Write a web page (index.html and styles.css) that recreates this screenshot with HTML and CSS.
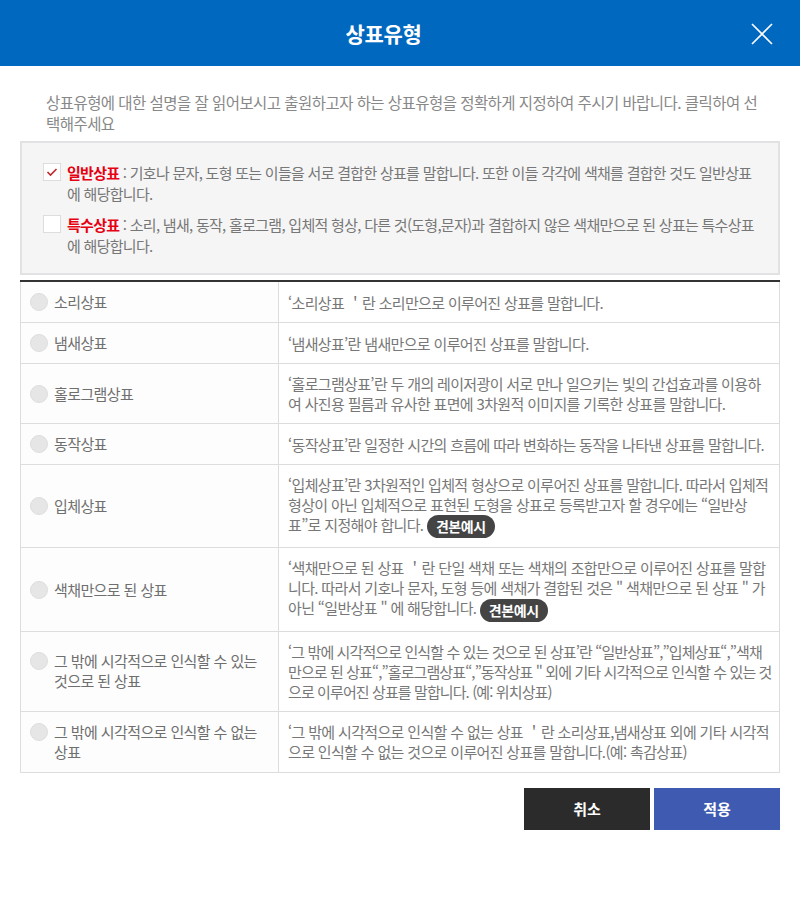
FILE: index.html
```html
<!DOCTYPE html>
<html lang="ko">

<head>
    <meta charset="UTF-8" />
    <meta name="viewport" content="width=device-width, initial-scale=1.0" />
    <title>상표유형</title>
    <link rel="stylesheet" href="styles.css">
</head>

<body>
    <div class="modal">
        <header class="modal-head">
            <h1>상표유형</h1>
            <button type="button" class="close-btn" aria-label="닫기">
                <svg width="22" height="22" viewBox="0 0 22 22">
                    <path d="M1 1L21 21M21 1L1 21" stroke="#fff" stroke-width="1.6" fill="none" />
                </svg>
            </button>
        </header>

        <div class="modal-body">
            <p class="intro">상표유형에 대한 설명을 잘 읽어보시고 출원하고자 하는 상표유형을 정확하게 지정하여 주시기 바랍니다. 클릭하여 선택해주세요</p>

            <div class="kind-box">
                <label class="kind">
                    <span class="check checked">
                        <svg width="12" height="10" viewBox="0 0 12 10">
                            <path d="M1.5 5L4.5 8L10.5 2" stroke="#c0282d" stroke-width="1.6" fill="none" />
                        </svg>
                    </span>
                    <span class="kind-text"><b>일반상표</b> : 기호나 문자, 도형 또는 이들을 서로 결합한 상표를 말합니다. 또한 이들 각각에 색채를 결합한 것도 일반상표에 해당합니다.</span>
                </label>
                <label class="kind">
                    <span class="check"></span>
                    <span class="kind-text"><b>특수상표</b> : 소리, 냄새, 동작, 홀로그램, 입체적 형상, 다른 것(도형,문자)과 결합하지 않은 색채만으로 된 상표는 특수상표에 해당합니다.</span>
                </label>
            </div>

            <table class="types">
                <tr>
                    <td class="name"><span class="radio"></span><span class="label">소리상표</span></td>
                    <td class="desc">‘소리상표 ＇란 소리만으로 이루어진 상표를 말합니다.</td>
                </tr>
                <tr>
                    <td class="name"><span class="radio"></span><span class="label">냄새상표</span></td>
                    <td class="desc">‘냄새상표’란 냄새만으로 이루어진 상표를 말합니다.</td>
                </tr>
                <tr>
                    <td class="name"><span class="radio"></span><span class="label">홀로그램상표</span></td>
                    <td class="desc">‘홀로그램상표’란 두 개의 레이저광이 서로 만나 일으키는 빛의 간섭효과를 이용하여 사진용 필름과 유사한 표면에 3차원적 이미지를 기록한 상표를 말합니다.</td>
                </tr>
                <tr>
                    <td class="name"><span class="radio"></span><span class="label">동작상표</span></td>
                    <td class="desc">‘동작상표’란 일정한 시간의 흐름에 따라 변화하는 동작을 나타낸 상표를 말합니다.</td>
                </tr>
                <tr>
                    <td class="name"><span class="radio"></span><span class="label">입체상표</span></td>
                    <td class="desc">‘입체상표’란 3차원적인 입체적 형상으로 이루어진 상표를 말합니다. 따라서 입체적 형상이 아닌 입체적으로 표현된 도형을 상표로 등록받고자 할 경우에는 “일반상표”로 지정해야 합니다. <span class="sample">견본예시</span></td>
                </tr>
                <tr>
                    <td class="name"><span class="radio"></span><span class="label">색채만으로 된 상표</span></td>
                    <td class="desc">‘색채만으로 된 상표 ＇란 단일 색채 또는 색채의 조합만으로 이루어진 상표를 말합니다. 따라서 기호나 문자, 도형 등에 색채가 결합된 것은 " 색채만으로 된 상표 " 가 아닌 “일반상표 " 에 해당합니다. <span class="sample">견본예시</span></td>
                </tr>
                <tr>
                    <td class="name"><span class="radio"></span><span class="label">그 밖에 시각적으로 인식할 수 있는 것으로 된 상표</span></td>
                    <td class="desc desc-tight">‘그 밖에 시각적으로 인식할 수 있는 것으로 된 상표’란 “일반상표”,”입체상표“,”색채만으로 된 상표“,”홀로그램상표“,”동작상표 " 외에 기타 시각적으로 인식할 수 있는 것으로 이루어진 상표를 말합니다. (예: 위치상표)</td>
                </tr>
                <tr>
                    <td class="name"><span class="radio"></span><span class="label">그 밖에 시각적으로 인식할 수 없는 상표</span></td>
                    <td class="desc">‘그 밖에 시각적으로 인식할 수 없는 상표 ＇란 소리상표,냄새상표 외에 기타 시각적으로 인식할 수 없는 것으로 이루어진 상표를 말합니다.(예: 촉감상표)</td>
                </tr>
            </table>

            <div class="actions">
                <button type="button" class="btn btn-cancel">취소</button>
                <button type="button" class="btn btn-apply">적용</button>
            </div>
        </div>
    </div>
</body>

</html>
```

FILE: styles.css
```css
body {
    margin: 0;
    padding: 0;
    background: #fff;
    font-family: "Noto Sans CJK KR", "Noto Sans", sans-serif;
    color: #777;
}

.modal-head {
    background: #0068bf;
    height: 66px;
    display: flex;
    align-items: center;
    justify-content: center;
    padding-right: 33px;
    position: relative;
}

.modal-head h1 {
    margin: 0;
    color: #fff;
    font-size: 21px;
    font-weight: 700;
    letter-spacing: -0.3px;
}

.close-btn {
    position: absolute;
    right: 27px;
    top: 23px;
    background: none;
    border: none;
    padding: 0;
    cursor: pointer;
}

.modal-body {
    padding: 26px 20px 0;
}

.intro {
    margin: 0 0 7px;
    padding: 0 20px 0 26px;
    font-size: 15.5px;
    line-height: 21px;
    letter-spacing: -0.55px;
    color: #888;
    word-break: break-all;
}

.kind-box {
    background: #f5f5f5;
    border: 2px solid #e2e2e4;
    padding: 19px 20px 17px 21px;
}

.kind {
    display: flex;
    align-items: flex-start;
    margin-bottom: 10px;
    cursor: pointer;
}

.kind:last-child {
    margin-bottom: 0;
}

.check {
    flex: 0 0 auto;
    width: 16px;
    height: 16px;
    border: 1px solid #ddd;
    background: #fff;
    margin: 1px 6px 0 0;
    display: flex;
    align-items: center;
    justify-content: center;
}

.kind-text {
    font-size: 15px;
    line-height: 21px;
    letter-spacing: -0.72px;
    color: #777;
    word-break: break-all;
}

.kind-text b {
    color: #e60012;
    font-weight: 700;
}

.types {
    width: 100%;
    border-collapse: collapse;
    margin-top: 5px;
    border-top: 2px solid #333;
}

.types td {
    border: 1px solid #ddd;
    font-size: 15px;
    line-height: 20px;
    letter-spacing: -0.6px;
    color: #777;
}

.types tr:first-child td {
    border-top: none;
}

.types .name {
    width: 238px;
    padding: 10px 10px 10px 9px;
    background: #fdfdfd;
    vertical-align: middle;
}

.label {
    display: inline-block;
    vertical-align: top;
    width: 208px;
    color: #6f6f6f;
}

.radio {
    display: inline-block;
    vertical-align: top;
    width: 18px;
    height: 18px;
    border-radius: 50%;
    background: #e6e6e6;
    border: 1px solid #dedede;
    box-sizing: border-box;
    margin: 1px 6px 0 0;
}

.types .desc {
    padding: 10px 7px 9px 9px;
    letter-spacing: -0.66px;
    word-break: break-all;
}

.types .desc-tight {
    letter-spacing: -0.9px;
}

.sample {
    display: inline-block;
    vertical-align: middle;
    background: #444;
    color: #fff;
    font-size: 14px;
    font-weight: 700;
    line-height: 23px;
    padding: 0 9px;
    border-radius: 12px;
    letter-spacing: -0.4px;
}

.actions {
    display: flex;
    justify-content: flex-end;
    gap: 4px;
    margin-top: 15px;
}

.btn {
    width: 126px;
    height: 42px;
    border: none;
    color: #fff;
    font-family: inherit;
    font-size: 15px;
    font-weight: 700;
    cursor: pointer;
}

.btn-cancel {
    background: #2b2b2b;
}

.btn-apply {
    background: #3f5bb1;
}
```
